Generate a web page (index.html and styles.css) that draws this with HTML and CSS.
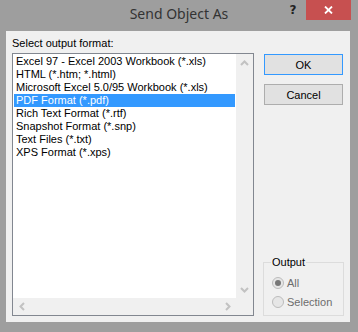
FILE: index.html
```html
<!DOCTYPE html>
<html lang="en">
<head>
  <meta charset="UTF-8">
  <title>Send Object As</title>
  <link rel="stylesheet" href="styles.css">
</head>
<body>
  <div class="window">
    <div class="titlebar">
      <span></span>
      <span class="title">Send Object As</span>
      <div class="caption-buttons">
        <span class="help">?</span>
        <span class="close">
          <svg width="9" height="8" viewBox="0 0 9 8"><path d="M1 0.5 L8 7.5 M8 0.5 L1 7.5" stroke="#fff" stroke-width="1.8" fill="none"/></svg>
        </span>
      </div>
    </div>

    <div class="client">
      <div class="left">
        <div class="label">Select output format:</div>
        <div class="listbox">
          <ul class="items">
            <li>Excel 97 - Excel 2003 Workbook (*.xls)</li>
            <li>HTML (*.htm; *.html)</li>
            <li>Microsoft Excel 5.0/95 Workbook (*.xls)</li>
            <li class="selected">PDF Format (*.pdf)</li>
            <li>Rich Text Format (*.rtf)</li>
            <li>Snapshot Format (*.snp)</li>
            <li>Text Files (*.txt)</li>
            <li>XPS Format (*.xps)</li>
          </ul>
          <div class="vscroll">
            <span class="arrow"><svg width="9" height="6" viewBox="0 0 9 6"><polyline points="1,5 4.5,1.5 8,5" fill="none" stroke="#c2c2c2" stroke-width="2"/></svg></span>
            <span class="arrow"><svg width="9" height="6" viewBox="0 0 9 6"><polyline points="1,1 4.5,4.5 8,1" fill="none" stroke="#c2c2c2" stroke-width="2"/></svg></span>
          </div>
          <div class="hscroll">
            <span class="arrow"><svg width="6" height="9" viewBox="0 0 6 9"><polyline points="5,1 1.5,4.5 5,8" fill="none" stroke="#c2c2c2" stroke-width="2"/></svg></span>
            <span class="arrow"><svg width="6" height="9" viewBox="0 0 6 9"><polyline points="1,1 4.5,4.5 1,8" fill="none" stroke="#c2c2c2" stroke-width="2"/></svg></span>
          </div>
          <div class="corner"></div>
        </div>
      </div>

      <div class="right">
        <button class="btn default">OK</button>
        <button class="btn">Cancel</button>
        <fieldset class="group">
          <legend>Output</legend>
          <div class="radio"><span class="circle checked"></span>All</div>
          <div class="radio"><span class="circle"></span>Selection</div>
        </fieldset>
      </div>
    </div>
  </div>
</body>
</html>
```

FILE: styles.css
```css
html, body {
  margin: 0;
  padding: 0;
}
body {
  background-color: #9e9e9e;
  font-family: 'Liberation Sans', Arial, sans-serif;
  font-size: 11px;
  color: #000;
}
.window {
  width: 358px;
  height: 332px;
  display: flex;
  flex-direction: column;
  background-color: #9e9e9e;
}
.titlebar {
  height: 31px;
  display: grid;
  grid-template-columns: 1fr auto 1fr;
}
.title {
  font-family: 'Noto Sans', sans-serif;
  font-size: 14px;
  line-height: 20px;
  padding-top: 4px;
  color: #333;
}
.caption-buttons {
  justify-self: end;
  display: flex;
  align-items: flex-start;
  margin-right: 7px;
}
.help {
  width: 26px;
  height: 20px;
  text-align: center;
  font-family: 'DejaVu Sans', sans-serif;
  font-weight: bold;
  font-size: 12px;
  line-height: 20px;
  color: #222;
}
.close {
  width: 45px;
  height: 20px;
  background-color: #c75050;
  display: flex;
  align-items: center;
  justify-content: center;
}
.client {
  flex: 1;
  margin: 0 8px 10px 6px;
  background-color: #f0f0f0;
  display: grid;
  grid-template-columns: 242px 81px;
  column-gap: 9px;
  padding: 6px 6px 6px 6px;
}
.left {
  display: flex;
  flex-direction: column;
}
.label {
  height: 13px;
  line-height: 13px;
  margin-bottom: 3px;
}
.listbox {
  height: 263px;
  box-sizing: border-box;
  border: 1px solid #828790;
  background-color: #fff;
  display: grid;
  grid-template-columns: 1fr 17px;
  grid-template-rows: 1fr 17px;
}
.items {
  list-style: none;
  margin: 0;
  padding: 1px;
  overflow: hidden;
}
.items li {
  height: 13px;
  line-height: 13px;
  padding-left: 2px;
  white-space: nowrap;
}
.items li.selected {
  background-color: #3399ff;
  color: #fff;
}
.vscroll {
  background-color: #f0f0f0;
  display: flex;
  flex-direction: column;
  justify-content: space-between;
}
.hscroll {
  background-color: #f0f0f0;
  display: flex;
  justify-content: space-between;
}
.corner {
  background-color: #f0f0f0;
}
.arrow {
  width: 17px;
  height: 17px;
  display: flex;
  align-items: center;
  justify-content: center;
}
.right {
  display: flex;
  flex-direction: column;
  padding-top: 17px;
}
.btn {
  width: 79px;
  height: 21px;
  margin: 0 1px;
  padding: 0;
  border: 1px solid #adadad;
  background-color: #e1e1e1;
  font-family: 'Liberation Sans', Arial, sans-serif;
  font-size: 11px;
  color: #000;
}
.btn + .btn {
  margin-top: 9px;
}
.btn.default {
  border-color: #3399ff;
}
.group {
  margin: auto 0 0 0;
  border: 1px solid #dcdcdc;
  padding: 4px 4px 4px 7px;
  min-width: 0;
}
.group legend {
  padding: 0 1px;
  line-height: 13px;
}
.radio {
  height: 19px;
  display: flex;
  align-items: center;
  color: #6d6d6d;
}
.circle {
  width: 12px;
  height: 12px;
  box-sizing: border-box;
  margin-left: 1px;
  margin-right: 3px;
  border: 1px solid #bcbcbc;
  border-radius: 50%;
  background-color: #e6e6e6;
  display: flex;
  align-items: center;
  justify-content: center;
}
.circle.checked::after {
  content: '';
  width: 6px;
  height: 6px;
  border-radius: 50%;
  background-color: #777;
}
```
